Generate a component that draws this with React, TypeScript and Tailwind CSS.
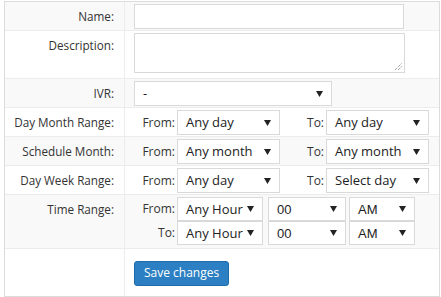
import React from 'react'

const font = { fontFamily: '"Open Sans", "Noto Sans", sans-serif' }

function Arrow() {
  return (
    <svg width="7" height="6" viewBox="0 0 7 6" className="shrink-0">
      <polygon points="0,0 7,0 3.5,6" fill="#222" />
    </svg>
  )
}

function Select({
  value,
  className,
  textClass = 'text-[13px]',
}: {
  value: string
  className: string
  textClass?: string
}) {
  return (
    <div
      className={`flex items-center justify-between border border-[#d9d9d9] bg-white pl-2 pr-[8px] ${className}`}
    >
      <span className={`${textClass} leading-none text-[#222]`}>{value}</span>
      <Arrow />
    </div>
  )
}

function Row({
  label,
  gray,
  height,
  children,
  first,
}: {
  label: string
  gray?: boolean
  height: string
  children?: React.ReactNode
  first?: boolean
}) {
  return (
    <div
      className={`flex ${height} ${gray ? 'bg-[#f9f9f9]' : 'bg-white'} ${
        first ? '' : 'border-t border-[#ececec]'
      }`}
    >
      <div className="w-[120px] shrink-0 border-r border-[#ececec] pr-[10px] pt-[6px] text-right text-[11.7px] leading-4 text-[#333]">
        {label}
      </div>
      <div className="flex-1 pl-[9px] pt-[2px]">{children}</div>
    </div>
  )
}

function RangeRow({ from, to }: { from: string; to: string }) {
  return (
    <div className="flex h-[25px] items-center">
      <div className="w-[43px] pr-[2px] text-right text-[12px] text-[#333]">From:</div>
      <Select value={from} className="h-[25px] w-[103px]" />
      <div className="w-[46px] pr-[2px] text-right text-[12px] text-[#333]">To:</div>
      <Select value={to} className="h-[25px] w-[103px]" />
    </div>
  )
}

function TimeLine({ label }: { label: string }) {
  const arial = 'text-[13px] font-["Liberation_Sans",Arial,sans-serif]'
  return (
    <div className="flex h-[24px] items-center">
      <div className="w-[43px] pr-[2px] text-right text-[12px] text-[#333]">{label}</div>
      <Select value="Any Hour" className="h-[24px] w-[86px]" />
      <Select value="00" className="ml-[5px] h-[24px] w-[78px]" textClass={arial} />
      <Select value="AM" className="ml-[3px] h-[24px] w-[66px]" textClass={arial} />
    </div>
  )
}

export default function App() {
  return (
    <div className="h-[297px] w-[441px] bg-white pl-[4px] pt-[1px]" style={font}>
      <div className="w-[436px] border border-[#dcdcdc]">
        <Row label="Name:" gray first height="h-[28px]">
          <div className="h-[25px] w-[270px] border border-[#d9d9d9] bg-white" />
        </Row>
        <Row label="Description:" height="h-[48px]">
          <div className="relative h-[40px] w-[271px] border border-[#d9d9d9] bg-white">
            <svg width="8" height="8" viewBox="0 0 8 8" className="absolute bottom-[2px] right-[2px]">
              <line x1="1" y1="8" x2="8" y2="1" stroke="#777" strokeWidth="1" strokeDasharray="1 1" />
              <line x1="4" y1="8" x2="8" y2="4" stroke="#777" strokeWidth="1" strokeDasharray="1 1" />
            </svg>
          </div>
        </Row>
        <Row label="IVR:" gray height="h-[29px]">
          <Select value="-" className="h-[25px] w-[198px]" />
        </Row>
        <Row label="Day Month Range:" height="h-[29px]">
          <RangeRow from="Any day" to="Any day" />
        </Row>
        <Row label="Schedule Month:" gray height="h-[29px]">
          <RangeRow from="Any month" to="Any month" />
        </Row>
        <Row label="Day Week Range:" height="h-[29px]">
          <RangeRow from="Any day" to="Select day" />
        </Row>
        <Row label="Time Range:" gray height="h-[54px]">
          <div className="flex flex-col">
            <TimeLine label="From:" />
            <TimeLine label="To:" />
          </div>
        </Row>
        <div className="flex h-[48px] border-t border-[#ececec] bg-white">
          <div className="w-[120px] shrink-0 border-r border-[#ececec]" />
          <div className="pl-[9px] pt-[10px]">
            <button className="h-[25px] rounded-[3px] border border-[#1f6aa8] bg-[#2b7fc2] px-[9px] text-[12px] leading-none text-white">
              Save changes
            </button>
          </div>
        </div>
      </div>
    </div>
  )
}
